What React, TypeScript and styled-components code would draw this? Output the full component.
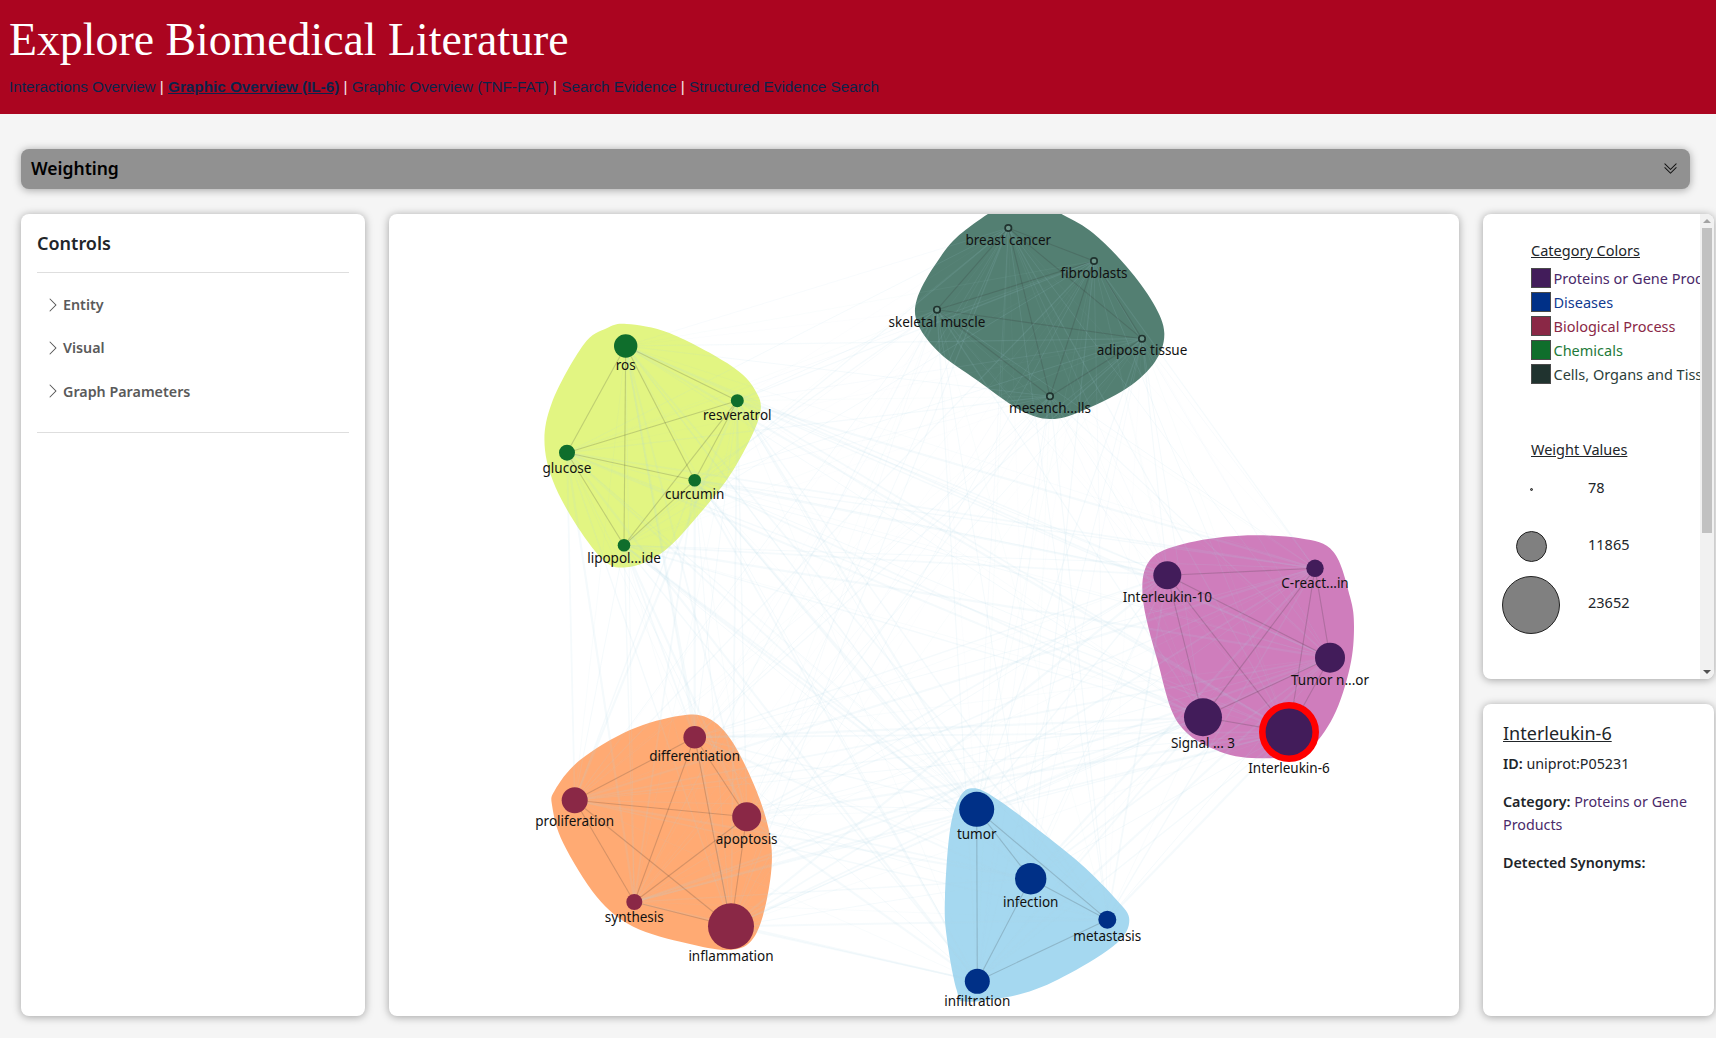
import React from "react";
import styled, { createGlobalStyle } from "styled-components";
import { BsChevronRight, BsChevronDoubleDown } from "react-icons/bs";

const UI_FONT = `"Noto Sans", "Open Sans", sans-serif`;

const GlobalStyle = createGlobalStyle`
  html, body {
    margin: 0;
    padding: 0;
    background: #f5f5f5;
    font-family: ${UI_FONT};
  }
`;

const Header = styled.header`
  height: 114px;
  box-sizing: border-box;
  background: #ab0520;
  padding: 12px 9px 0;
`;
const Title = styled.h1`
  margin: 0;
  font-family: "Liberation Serif", serif;
  font-weight: 400;
  font-size: 45.8px;
  line-height: 55px;
  color: #fff;
`;
const Nav = styled.nav`
  margin-top: 11px;
  font-family: "Liberation Sans", sans-serif;
  font-size: 15.25px;
  line-height: 18px;
  color: #f5e9ea;
`;
const NavLink = styled.a<{ $active?: boolean }>`
  color: #0c234b;
  font-weight: ${({ $active }) => ($active ? 700 : 400)};
  text-decoration: ${({ $active }) => ($active ? "underline" : "none")};
`;

const Main = styled.main`
  padding: 35px 2px 22px 21px;
`;
const AccordionBar = styled.div`
  width: 1669px;
  height: 40px;
  box-sizing: border-box;
  padding: 0 12px 2px 10px;
  display: flex;
  align-items: center;
  justify-content: space-between;
  background: #919191;
  border-radius: 8px;
  box-shadow: 0 1px 8px rgba(0, 0, 0, 0.35);
  color: #000;
  font-size: 17.5px;
  font-weight: 600;
`;
const Columns = styled.div`
  margin-top: 25px;
  display: grid;
  grid-template-columns: 344px 1070px 231px;
  column-gap: 24px;
  height: 802px;
`;
const Card = styled.section`
  background: #fff;
  border-radius: 8px;
  box-shadow: 0 1px 8px rgba(0, 0, 0, 0.35);
  color: #212529;
`;

const ControlsCard = styled(Card)`
  padding: 16px 16px 16px;
`;
const ControlsTitle = styled.h2`
  margin: 0;
  font-size: 18px;
  line-height: 26px;
  font-weight: 600;
  color: #212529;
  padding-bottom: 16px;
  border-bottom: 1.5px solid #dedede;
`;
const ControlsList = styled.div`
  padding: 10px 0 19px 7.5px;
  border-bottom: 1.5px solid #dedede;
`;
const ControlsItem = styled.div`
  height: 43.3px;
  display: flex;
  align-items: center;
  gap: 2.5px;
  font-size: 14.3px;
  font-weight: 600;
  color: #5a5a5a;
`;

const GraphCard = styled(Card)`
  overflow: hidden;
`;
const GraphSvg = styled.svg`
  display: block;
  width: 100%;
  height: 100%;
  font-family: ${UI_FONT};
`;
const NodeLabel = styled.text`
  font-size: 13.5px;
  fill: #111;
  text-anchor: middle;
  dominant-baseline: central;
`;

const SideColumn = styled.div`
  display: flex;
  flex-direction: column;
  gap: 25px;
  min-height: 0;
`;
const LegendCard = styled(Card)`
  height: 465px;
  flex: none;
  display: flex;
  overflow: hidden;
`;
const LegendBody = styled.div`
  flex: 1;
  min-width: 0;
  overflow: hidden;
  box-sizing: border-box;
  padding: 26px 0 0 18px;
  white-space: nowrap;
  font-size: 14.5px;
  line-height: 20px;
`;
const ScrollRail = styled.div`
  flex: none;
  width: 14px;
  display: flex;
  flex-direction: column;
  align-items: center;
  background: #f1f1f1;
`;
const ScrollArrow = styled.span<{ $down?: boolean }>`
  flex: none;
  margin: 5px 0;
  width: 0;
  height: 0;
  border-left: 4px solid transparent;
  border-right: 4px solid transparent;
  ${({ $down }) =>
    $down ? "margin-top: auto; border-top: 4px solid #505050;" : "border-bottom: 4px solid #a3a3a3;"}
`;
const ScrollThumb = styled.span`
  flex: none;
  width: 10px;
  height: 305px;
  background: #c1c1c1;
`;
const LegendHeading = styled.div`
  margin-left: 30px;
  color: #212529;
  text-decoration: underline;
`;
const CategoryList = styled.div`
  margin: 8px 0 55px 29.5px;
  display: flex;
  flex-direction: column;
  gap: 4px;
`;
const CategoryRow = styled.div<{ $color: string }>`
  display: flex;
  align-items: center;
  height: 20px;
  gap: 3px;
  color: ${({ $color }) => $color};
`;
const Swatch = styled.span<{ $color: string }>`
  flex: none;
  width: 20px;
  height: 20px;
  box-sizing: border-box;
  border: 1px solid #4a4a4a;
  background: ${({ $color }) => $color};
`;
const WeightList = styled.div`
  margin-top: 1px;
`;
const WeightRow = styled.div`
  display: grid;
  grid-template-columns: 60px 1fr;
  column-gap: 27px;
  height: 57px;
  align-items: center;
`;
const WeightDot = styled.span<{ $size: number }>`
  justify-self: center;
  margin-top: 2px;
  width: ${({ $size }) => $size}px;
  height: ${({ $size }) => $size}px;
  box-sizing: border-box;
  border-radius: 50%;
  background: #808080;
  border: 1px solid #222;
`;
const WeightValue = styled.span`
  color: #212529;
  padding-bottom: 4px;
`;

const DetailCard = styled(Card)`
  flex: 1;
  padding: 17px 20px;
  font-size: 14.3px;
  line-height: 23px;
`;
const DetailTitle = styled.div`
  font-size: 18px;
  line-height: 24px;
  text-decoration: underline;
  margin-bottom: 7px;
`;
const DetailLine = styled.p`
  margin: 0 0 15px;
`;
const DetailKey = styled.b`
  font-weight: 600;
`;
const Purple = styled.span`
  color: #4a2a6a;
`;

type Pt = [number, number];

// closed smooth curve through points (catmull-rom), points given in zoomed coords
const hullPath = (ox: number, oy: number, raw: Pt[]) => {
  const p = raw.map(([x, y]): Pt => [ox + x / 3, oy + y / 3]);
  const n = p.length;
  let d = `M${p[0][0].toFixed(1)} ${p[0][1].toFixed(1)}`;
  for (let i = 0; i < n; i++) {
    const a = p[(i - 1 + n) % n];
    const b = p[i];
    const c = p[(i + 1) % n];
    const e = p[(i + 2) % n];
    const c1 = [b[0] + (c[0] - a[0]) / 6, b[1] + (c[1] - a[1]) / 6];
    const c2 = [c[0] - (e[0] - b[0]) / 6, c[1] - (e[1] - b[1]) / 6];
    d += `C${c1[0].toFixed(1)} ${c1[1].toFixed(1)} ${c2[0].toFixed(1)} ${c2[1].toFixed(1)} ${c[0].toFixed(1)} ${c[1].toFixed(1)}`;
  }
  return d + "Z";
};

const hulls = [
  {
    fill: "#537f72",
    d: hullPath(860, 210, [
      [490, -40], [610, 15], [700, 70], [800, 170], [880, 280], [913, 370], [885, 455], [800, 535],
      [660, 605], [570, 627], [480, 600], [350, 510], [240, 430], [175, 345], [170, 270], [225, 165], [310, 65],
    ]),
  },
  {
    fill: "#e2f582",
    d: hullPath(520, 310, [
      [320, 42], [450, 70], [630, 165], [705, 240], [718, 320], [640, 480], [540, 610], [430, 725],
      [320, 772], [240, 740], [125, 570], [75, 420], [95, 280], [190, 105], [260, 55],
    ]),
  },
  {
    fill: "#cf7dbc",
    d: hullPath(1120, 520, [
      [90, 120], [190, 72], [360, 47], [540, 55], [640, 95], [690, 230], [702, 320], [690, 440],
      [640, 590], [560, 690], [440, 715], [300, 695], [175, 610], [112, 420], [68, 230],
    ]),
  },
  {
    fill: "#ffaa73",
    d: hullPath(520, 700, [
      [105, 270], [180, 180], [330, 90], [480, 47], [565, 55], [640, 130], [720, 300], [755, 450],
      [740, 600], [700, 715], [630, 750], [500, 730], [340, 680], [230, 590], [130, 430], [97, 320],
    ]),
  },
  {
    fill: "#a5d8f0",
    d: hullPath(930, 770, [
      [130, 55], [190, 80], [300, 160], [450, 280], [560, 390], [598, 450], [560, 520], [420, 610],
      [280, 670], [110, 695], [80, 660], [50, 500], [45, 380], [60, 180], [90, 80],
    ]),
  },
];

const colors = {
  protein: "#421c5a",
  disease: "#003087",
  process: "#8a2846",
  chemical: "#0f6e2c",
  tissue: "#20332f",
};

type GraphNode = { label: string; x: number; y: number; r: number; ly: number; group: keyof typeof colors };

const nodes: GraphNode[] = [
  { label: "breast cancer", x: 1008.3, y: 228, r: 3.2, ly: 240, group: "tissue" },
  { label: "fibroblasts", x: 1094, y: 261, r: 3.2, ly: 273, group: "tissue" },
  { label: "skeletal muscle", x: 937, y: 309.7, r: 3.2, ly: 322, group: "tissue" },
  { label: "adipose tissue", x: 1142, y: 338.7, r: 3.2, ly: 350.3, group: "tissue" },
  { label: "mesench...lls", x: 1050, y: 396.3, r: 3.2, ly: 408.3, group: "tissue" },
  { label: "ros", x: 625.7, y: 346, r: 11.7, ly: 365, group: "chemical" },
  { label: "resveratrol", x: 737.3, y: 400.7, r: 6.5, ly: 415, group: "chemical" },
  { label: "glucose", x: 567, y: 452.7, r: 8, ly: 468, group: "chemical" },
  { label: "curcumin", x: 694.7, y: 480.3, r: 6.3, ly: 494, group: "chemical" },
  { label: "lipopol...ide", x: 624, y: 545.3, r: 6.3, ly: 558.3, group: "chemical" },
  { label: "Interleukin-10", x: 1167.3, y: 575.3, r: 14, ly: 596.6, group: "protein" },
  { label: "C-react...in", x: 1315, y: 568.3, r: 8.7, ly: 583.3, group: "protein" },
  { label: "Tumor n...or", x: 1330, y: 657.7, r: 15, ly: 680, group: "protein" },
  { label: "Signal ... 3", x: 1203, y: 717.3, r: 19, ly: 743.3, group: "protein" },
  { label: "Interleukin-6", x: 1289, y: 732, r: 26.7, ly: 768.3, group: "protein" },
  { label: "differentiation", x: 694.7, y: 737.3, r: 11.3, ly: 756, group: "process" },
  { label: "proliferation", x: 574.7, y: 800.3, r: 13, ly: 821, group: "process" },
  { label: "apoptosis", x: 746.7, y: 816.7, r: 14.5, ly: 838.6, group: "process" },
  { label: "synthesis", x: 634.3, y: 902, r: 8, ly: 917, group: "process" },
  { label: "inflammation", x: 731, y: 926.3, r: 23, ly: 956, group: "process" },
  { label: "tumor", x: 976.7, y: 809.3, r: 17.5, ly: 834, group: "disease" },
  { label: "infection", x: 1030.7, y: 878.7, r: 15.7, ly: 901.6, group: "disease" },
  { label: "metastasis", x: 1107.3, y: 919.7, r: 9, ly: 936, group: "disease" },
  { label: "infiltration", x: 977.3, y: 981.3, r: 12.5, ly: 1000.6, group: "disease" },
];

const pairs: { a: GraphNode; b: GraphNode; same: boolean; w: number }[] = [];
nodes.forEach((a, i) =>
  nodes.slice(i + 1).forEach((b, j) => {
    const w = 0.6 + ((i * 7 + j * 13) % 5) * 0.4;
    // tissue links are the weakest in the picture
    pairs.push({ a, b, same: a.group === b.group, w: a.group === "tissue" ? w * 0.55 : w });
  })
);

const Edge = styled.line<{ $same: boolean }>`
  stroke: ${({ $same }) => ($same ? "rgba(50, 50, 50, 0.2)" : "rgba(173, 216, 230, 0.12)")};
`;

const categories = [
  { name: "Proteins or Gene Products", swatch: colors.protein, text: "#4a2a6a" },
  { name: "Diseases", swatch: colors.disease, text: "#0f3a90" },
  { name: "Biological Process", swatch: colors.process, text: "#8a2846" },
  { name: "Chemicals", swatch: colors.chemical, text: "#1e7a3a" },
  { name: "Cells, Organs and Tissues", swatch: colors.tissue, text: "#2c3f3b" },
];

const weights = [
  { value: 78, size: 3 },
  { value: 11865, size: 31 },
  { value: 23652, size: 58 },
];

const navItems = [
  "Interactions Overview",
  "Graphic Overview (IL-6)",
  "Graphic Overview (TNF-FAT)",
  "Search Evidence",
  "Structured Evidence Search",
];

const NodeDot = ({ node }: { node: GraphNode }) => {
  if (node.group === "tissue") {
    return <circle cx={node.x} cy={node.y} r={node.r} fill="#6b9488" stroke={colors.tissue} strokeWidth={1.7} />;
  }
  if (node.label === "Interleukin-6") {
    return <circle cx={node.x} cy={node.y} r={node.r} fill={colors.protein} stroke="#ff0000" strokeWidth={6.6} />;
  }
  return <circle cx={node.x} cy={node.y} r={node.r} fill={colors[node.group]} />;
};

const App = () => {
  return (
    <>
      <GlobalStyle />
      <Header>
        <Title>Explore Biomedical Literature</Title>
        <Nav>
          {navItems.map((item, i) => (
            <React.Fragment key={item}>
              {i > 0 && " | "}
              <NavLink href="#" $active={i === 1}>
                {item}
              </NavLink>
            </React.Fragment>
          ))}
        </Nav>
      </Header>
      <Main>
        <AccordionBar>
          Weighting
          <BsChevronDoubleDown size={15} color="#111" />
        </AccordionBar>
        <Columns>
          <ControlsCard>
            <ControlsTitle>Controls</ControlsTitle>
            <ControlsList>
              {["Entity", "Visual", "Graph Parameters"].map((item) => (
                <ControlsItem key={item}>
                  <BsChevronRight size={16} color="#555" />
                  {item}
                </ControlsItem>
              ))}
            </ControlsList>
          </ControlsCard>
          <GraphCard>
            <GraphSvg viewBox="389 214 1070 802">
              {hulls.map((h) => (
                <path key={h.fill} d={h.d} fill={h.fill} />
              ))}
              {pairs.map(({ a, b, same, w }) => (
                <Edge
                  key={a.label + b.label}
                  $same={same}
                  x1={a.x}
                  y1={a.y}
                  x2={b.x}
                  y2={b.y}
                  strokeWidth={same ? 1.1 : w}
                />
              ))}
              {nodes.map((n) => (
                <NodeDot key={n.label} node={n} />
              ))}
              {nodes.map((n) => (
                <NodeLabel key={n.label} x={n.x} y={n.ly}>
                  {n.label}
                </NodeLabel>
              ))}
            </GraphSvg>
          </GraphCard>
          <SideColumn>
            <LegendCard>
              <LegendBody>
                <LegendHeading>Category Colors</LegendHeading>
                <CategoryList>
                  {categories.map((c) => (
                    <CategoryRow key={c.name} $color={c.text}>
                      <Swatch $color={c.swatch} />
                      {c.name}
                    </CategoryRow>
                  ))}
                </CategoryList>
                <LegendHeading>Weight Values</LegendHeading>
                <WeightList>
                  {weights.map((w) => (
                    <WeightRow key={w.value}>
                      <WeightDot $size={w.size} />
                      <WeightValue>{w.value}</WeightValue>
                    </WeightRow>
                  ))}
                </WeightList>
              </LegendBody>
              <ScrollRail>
                <ScrollArrow />
                <ScrollThumb />
                <ScrollArrow $down />
              </ScrollRail>
            </LegendCard>
            <DetailCard>
              <DetailTitle>Interleukin-6</DetailTitle>
              <DetailLine>
                <DetailKey>ID:</DetailKey> uniprot:P05231
              </DetailLine>
              <DetailLine>
                <DetailKey>Category:</DetailKey> <Purple>Proteins or Gene Products</Purple>
              </DetailLine>
              <DetailLine>
                <DetailKey>Detected Synonyms:</DetailKey>
              </DetailLine>
            </DetailCard>
          </SideColumn>
        </Columns>
      </Main>
    </>
  );
};

export default App;
